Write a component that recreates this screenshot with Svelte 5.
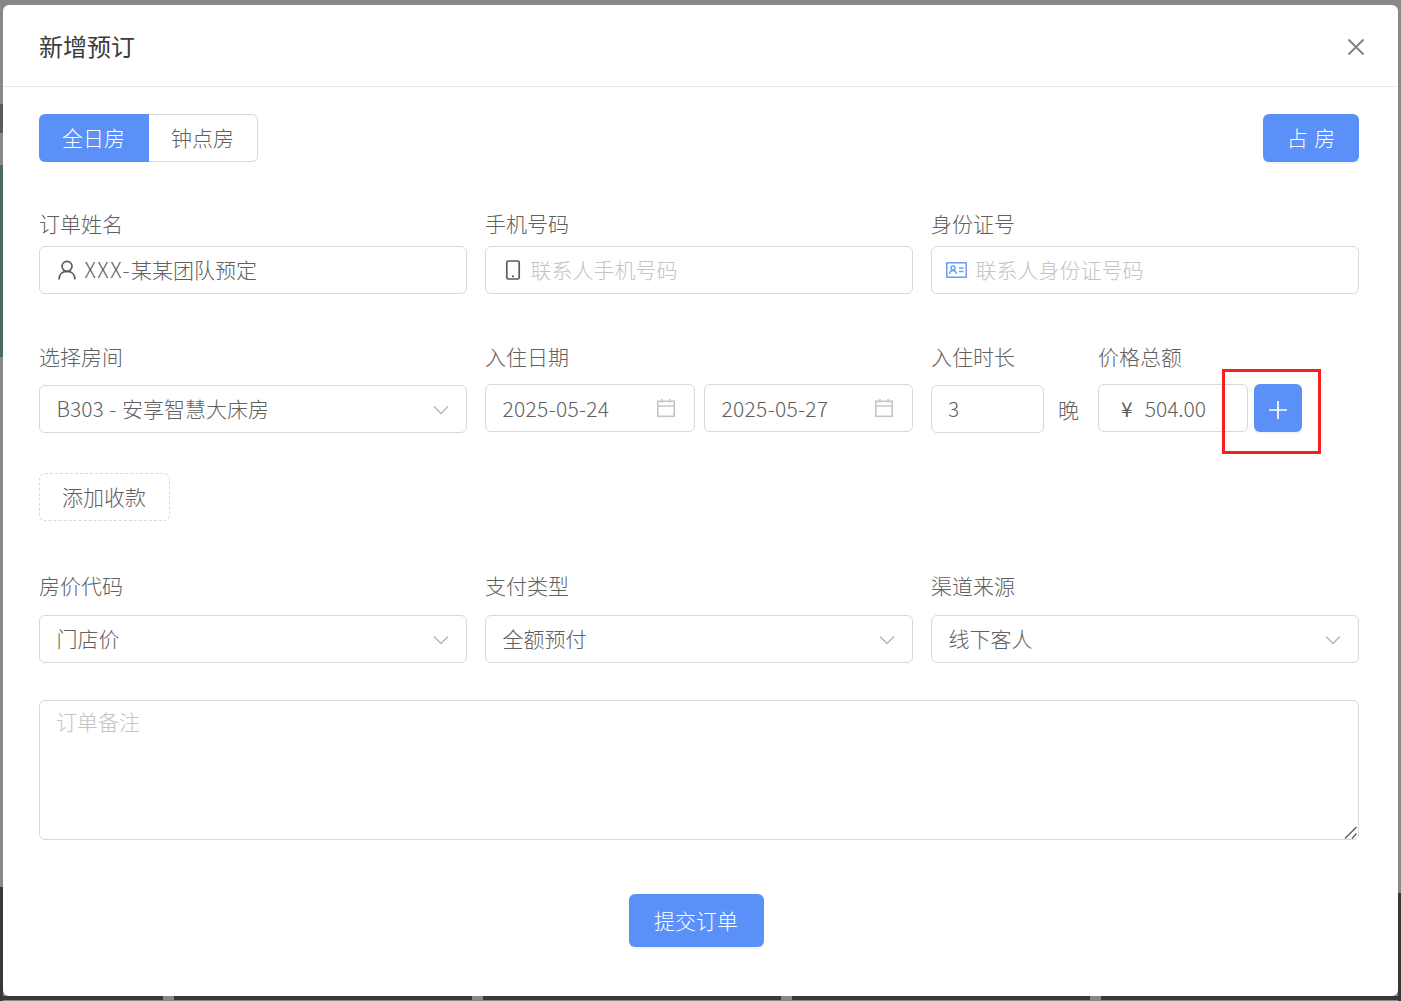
<script>
    const primaryOptions = [
        { label: "房价代码", value: "门店价" },
        { label: "支付类型", value: "全额预付" },
        { label: "渠道来源", value: "线下客人" },
    ];
    const dates = ["2025-05-24", "2025-05-27"];
    const gaps = [163, 472, 781, 1090];
</script>

{#snippet chevron()}
    <svg class="chevron" width="16" height="10" viewBox="0 0 16 10" fill="none">
        <path d="M1 1.500 8 8.500 15 1.500" stroke="#b5b5b5" stroke-width="1.400" />
    </svg>
{/snippet}

{#snippet calendar()}
    <svg class="calendar" width="20" height="20" viewBox="0 0 20 20" fill="none" stroke="#c6c6c6" stroke-width="1.600">
        <rect x="1.800" y="3.300" width="16.400" height="15" />
        <path d="M1.800 8h16.400M6 1v3.500M14 1v3.500" />
    </svg>
{/snippet}

<div class="backdrop">
    <div class="strip left-mark"></div>
    <div class="strip left-green"></div>
    <div class="strip left-dark"></div>
    <div class="strip right-dark"></div>
    <div class="strip bottom-dark">
        {#each gaps as x}
            <span class="gap" style="left: {x}px"></span>
        {/each}
    </div>

    <div class="modal">
        <header class="modal-header">
            <h1>新增预订</h1>
            <svg class="close" width="20" height="20" viewBox="0 0 20 20" fill="none" stroke="#808080" stroke-width="1.800">
                <path d="M2.500 2.500 17.500 17.500M17.500 2.500 2.500 17.500" />
            </svg>
        </header>

        <div class="modal-body">
            <div class="top-row">
                <div class="toggle">
                    <span class="tab active">全日房</span>
                    <span class="tab">钟点房</span>
                </div>
                <button class="btn occupy">占 房</button>
            </div>

            <div class="grid first">
                <div class="field">
                    <span class="label">订单姓名</span>
                    <div class="control">
                        <svg class="prefix shifted" width="20" height="20" viewBox="0 0 20 20" fill="none" stroke="#5c5c5c" stroke-width="1.700">
                            <circle cx="10" cy="6.300" r="5" />
                            <path d="M2 19.500c0-5 3.200-8.200 8-8.200s8 3.200 8 8.200" />
                        </svg>
                        <span><span class="latin-wide">XXX-</span>某某团队预定</span>
                    </div>
                </div>
                <div class="field">
                    <span class="label">手机号码</span>
                    <div class="control">
                        <svg class="prefix shifted" width="20" height="20" viewBox="0 0 20 20" fill="none" stroke="#5c5c5c" stroke-width="1.700">
                            <rect x="3.800" y="1" width="12.400" height="18" rx="1.500" />
                            <path d="M9 16.400h2" />
                        </svg>
                        <input placeholder="联系人手机号码" />
                    </div>
                </div>
                <div class="field">
                    <span class="label">身份证号</span>
                    <div class="control">
                        <svg class="prefix id-card" width="21" height="16" viewBox="0 0 21 16" fill="none" stroke="#6d9cf7" stroke-width="1.500">
                            <rect x="0.800" y="0.800" width="19.400" height="14.400" />
                            <circle cx="7" cy="6" r="2" />
                            <path d="M3.500 12c.3-2.200 1.600-3.400 3.500-3.400s3.200 1.200 3.500 3.400M13 6h4.500M13 9.500h4.500" />
                        </svg>
                        <input placeholder="联系人身份证号码" />
                    </div>
                </div>
            </div>

            <div class="grid second">
                <div class="field">
                    <span class="label">选择房间</span>
                    <div class="control select offset">
                        <span class="room">B303 - 安享智慧大床房</span>
                        {@render chevron()}
                    </div>
                </div>
                <div class="field">
                    <span class="label">入住日期</span>
                    <div class="dates">
                        {#each dates as date}
                            <div class="control date">
                                <span class="date-text">{date}</span>
                                {@render calendar()}
                            </div>
                        {/each}
                    </div>
                </div>
                <div class="stay">
                    <div class="field nights">
                        <span class="label">入住时长</span>
                        <div class="nights-row">
                            <div class="control number offset"><span>3</span></div>
                            <span class="unit">晚</span>
                        </div>
                    </div>
                    <div class="field total">
                        <span class="label">价格总额</span>
                        <div class="total-row">
                            <div class="control price"><span class="yen">¥</span><span>504.00</span></div>
                            <button class="btn plus" aria-label="add">
                                <svg width="20" height="20" viewBox="0 0 20 20" stroke="#fff" stroke-width="1.700">
                                    <path d="M10 1v18M1 10h18" />
                                </svg>
                            </button>
                        </div>
                    </div>
                </div>
            </div>

            <button class="add-payment">添加收款</button>

            <div class="grid fourth">
                {#each primaryOptions as option}
                    <div class="field">
                        <span class="label">{option.label}</span>
                        <div class="control select">
                            <span>{option.value}</span>
                            {@render chevron()}
                        </div>
                    </div>
                {/each}
            </div>

            <div class="remark">
                <textarea placeholder="订单备注"></textarea>
                <svg class="grip" width="14" height="13" viewBox="0 0 14 13" fill="none" stroke="#555" stroke-width="1.200">
                    <path d="M1 12.500 12.500 1M8 12.500 12.500 7.500" />
                </svg>
            </div>

            <div class="footer">
                <button class="btn submit">提交订单</button>
            </div>
        </div>
    </div>

    <div class="annotation"></div>
</div>

<style>
    :global(body) {
        margin: 0;
    }

    .backdrop {
        position: relative;
        width: 1401px;
        height: 1001px;
        box-sizing: border-box;
        padding: 5px 3px;
        overflow: hidden;
        background: #888;
        font-family: "Noto Sans CJK SC", "Open Sans", sans-serif;
        font-size: 21px;
        font-weight: 300;
        color: #606060;
    }

    .strip {
        position: absolute;
    }

    .left-mark {
        left: 0;
        top: 104px;
        width: 3px;
        height: 29px;
        background: #5a5a5a;
    }

    .left-green {
        left: 0;
        top: 165px;
        width: 3px;
        height: 192px;
        background: #4a6a5e;
    }

    .left-dark {
        left: 0;
        top: 887px;
        width: 3px;
        height: 114px;
        background: #383838;
    }

    .right-dark {
        right: 0;
        top: 893px;
        width: 3px;
        height: 108px;
        background: #383838;
    }

    .bottom-dark {
        left: 0;
        right: 0;
        top: 996px;
        height: 4px;
        background: #383838;
    }

    .gap {
        position: absolute;
        top: 0;
        width: 11px;
        height: 4px;
        background: #888;
    }

    .modal {
        position: relative;
        height: 991px;
        background: #fff;
        border-radius: 6px;
    }

    .modal-header {
        display: flex;
        align-items: center;
        justify-content: space-between;
        box-sizing: border-box;
        height: 82px;
        padding: 0 32px 0 36px;
        border-bottom: 1px solid #e9e9e9;
    }

    .close {
        margin-top: 3px;
    }

    h1 {
        margin: 0;
        font-size: 24px;
        font-weight: 400;
        color: #3c3c3c;
    }

    .modal-body {
        padding: 27px 39px 0 36px;
    }

    .top-row {
        display: flex;
        justify-content: space-between;
    }

    .toggle {
        display: flex;
        height: 48px;
    }

    .tab {
        display: flex;
        align-items: center;
        justify-content: center;
        box-sizing: border-box;
        width: 109px;
        padding: 0 1px 2px 0;
        border: 1px solid #d9d9d9;
        border-left: 0;
        border-radius: 0 6px 6px 0;
    }

    .tab.active {
        width: 110px;
        border: 0;
        border-radius: 6px 0 0 6px;
        background: #5a90f8;
        color: #fff;
    }

    .btn {
        border: 0;
        border-radius: 6px;
        background: #5a90f8;
        box-shadow: 0 2px 0 rgba(0, 0, 0, 0.045);
        color: #fff;
        font: inherit;
        padding: 0 0 2px;
    }

    .occupy {
        width: 96px;
        height: 48px;
        word-spacing: 2px;
    }

    .grid {
        display: grid;
        grid-template-columns: repeat(3, 428px);
        gap: 18px;
    }

    .first {
        margin-top: 47px;
    }

    .second {
        margin-top: 48px;
    }

    .fourth {
        margin-top: 50px;
    }

    .field {
        display: flex;
        flex-direction: column;
    }

    .label {
        display: block;
        height: 30px;
        line-height: 28px;
        margin-bottom: 7px;
    }

    .second .label {
        margin-bottom: 12px;
    }

    .fourth .label {
        margin-bottom: 14px;
    }

    .control {
        display: flex;
        align-items: center;
        box-sizing: border-box;
        height: 48px;
        padding: 0 17px 2px 16.500px;
        border: 1px solid #d9d9d9;
        border-radius: 6px;
        background: #fff;
        min-width: 0;
    }

    .offset {
        margin-top: 1px;
    }

    .latin-wide {
        letter-spacing: 1.500px;
    }

    .room {
        word-spacing: 1px;
    }

    .date-text {
        letter-spacing: 0.300px;
    }

    .prefix {
        flex: none;
        margin-top: 2px;
    }

    .prefix.shifted {
        margin-right: 8px;
    }

    .prefix.id-card {
        margin: 2px 9px 0 -3px;
    }

    .control input {
        flex: 1;
        min-width: 0;
        border: 0;
        outline: 0;
        padding: 0;
        background: none;
        font: inherit;
        color: inherit;
    }

    input::placeholder,
    textarea::placeholder {
        color: #c4c4c4;
        opacity: 1;
    }

    .select {
        justify-content: space-between;
    }

    .chevron {
        margin-top: 3px;
    }

    .calendar {
        margin-top: 1px;
    }

    .dates {
        display: grid;
        grid-template-columns: 210px 209px;
        gap: 9px;
    }

    .date {
        justify-content: space-between;
        padding: 0 18px 1px 16.500px;
    }

    .stay {
        display: flex;
    }

    .nights {
        width: 167px;
    }

    .nights-row,
    .total-row {
        display: flex;
        align-items: flex-start;
    }

    .number {
        width: 113px;
        padding-left: 16px;
    }

    .unit {
        margin-left: 14px;
        height: 48px;
        line-height: 50px;
    }

    .total-row {
        gap: 6px;
    }

    .price {
        width: 150px;
        padding: 0 16px 1px 22px;
    }

    .yen {
        margin-right: 12px;
        font-weight: 400;
    }

    .plus {
        display: flex;
        align-items: center;
        justify-content: center;
        width: 48px;
        height: 48px;
        padding: 4px 0 0;
    }

    .add-payment {
        display: block;
        width: 131px;
        height: 48px;
        margin-top: 40px;
        padding: 0 1px 2px 0;
        border: 1px dashed #d9d9d9;
        border-radius: 6px;
        background: #fff;
        font: inherit;
        color: inherit;
    }

    .remark {
        position: relative;
        margin-top: 37px;
        height: 140px;
    }

    textarea {
        display: block;
        box-sizing: border-box;
        width: 1320px;
        height: 140px;
        padding: 5px 16px;
        border: 1px solid #d9d9d9;
        border-radius: 6px;
        outline: 0;
        resize: none;
        font: inherit;
        color: inherit;
    }

    .grip {
        position: absolute;
        right: 1px;
        bottom: 1px;
        pointer-events: none;
    }

    .footer {
        display: flex;
        justify-content: center;
        margin-top: 54px;
        padding-right: 5px;
    }

    .submit {
        width: 135px;
        height: 53px;
        padding: 0 1px 2px 0;
    }

    .annotation {
        position: absolute;
        left: 1222px;
        top: 369px;
        box-sizing: border-box;
        width: 99px;
        height: 85px;
        border: 3px solid #f5201a;
    }
</style>
